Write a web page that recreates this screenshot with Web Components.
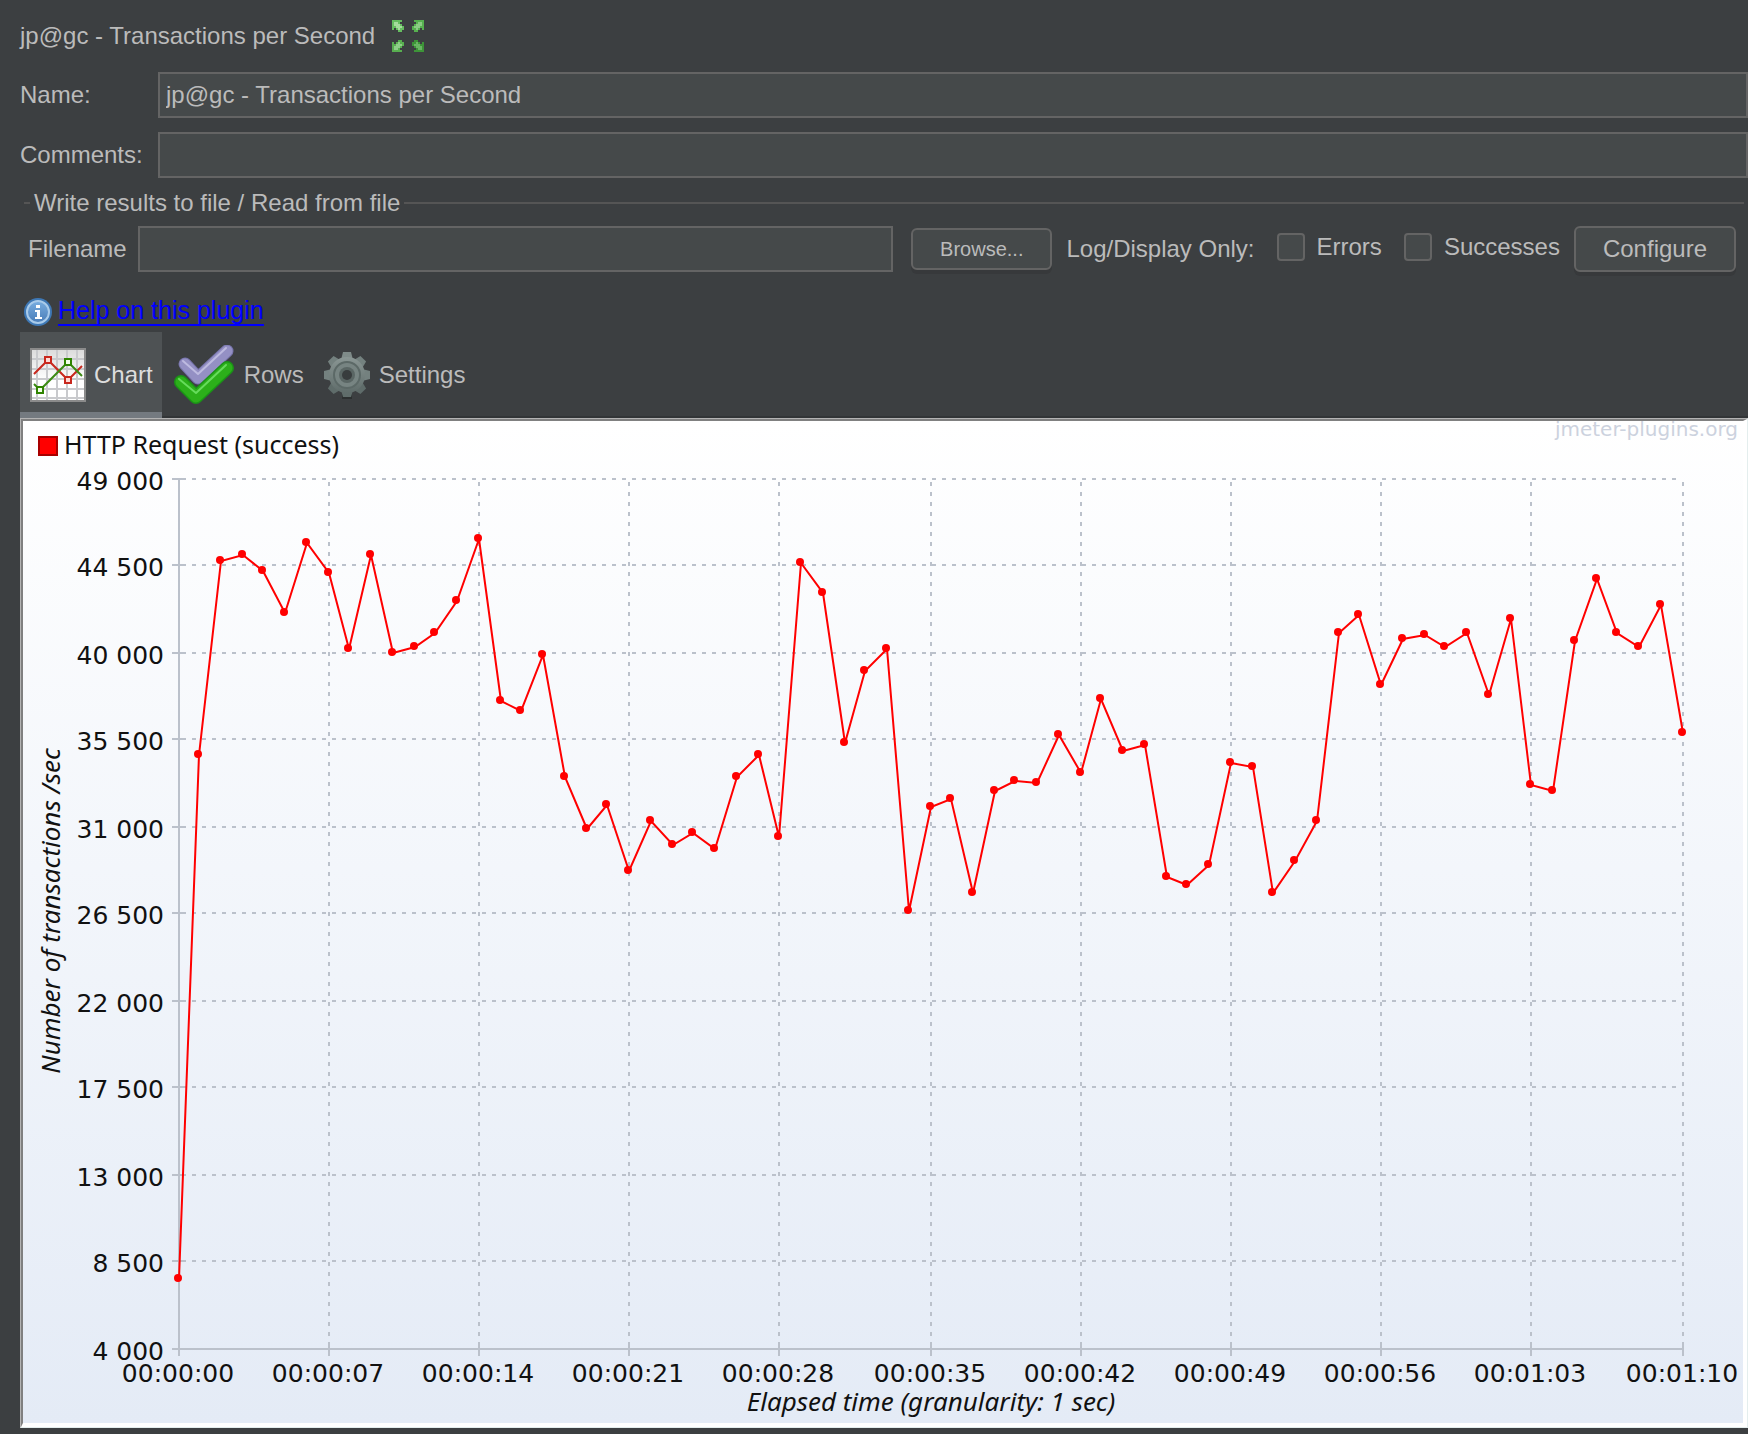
<!DOCTYPE html>
<html lang="en">
<head>
<meta charset="utf-8">
<title>jp@gc - Transactions per Second</title>
<style>
  body {
    margin: 0;
    background: #3c3f41;
    --text: #bbbbbb;
    --field: #45494a;
    --line: #646464;
    color: var(--text);
    font: 24px/28px "Liberation Sans", Arial, sans-serif;
  }
</style>
</head>
<body>
<jm-listener>
  <jm-title slot="title">jp@gc - Transactions per Second</jm-title>
  <jm-field slot="fields" label="Name:" value="jp@gc - Transactions per Second"></jm-field>
  <jm-field slot="fields" label="Comments:"></jm-field>
  <jm-file-panel slot="file"></jm-file-panel>
  <jm-help slot="help">Help on this plugin</jm-help>
  <jm-tabs slot="tabs">
    <jm-tab icon="chart" selected>Chart</jm-tab>
    <jm-tab icon="rows">Rows</jm-tab>
    <jm-tab icon="settings">Settings</jm-tab>
  </jm-tabs>
  <jm-chart-panel>
    <jm-chart legend="HTTP Request (success)" x-title="Elapsed time (granularity: 1 sec)" y-title="Number of transactions /sec" credit="jmeter-plugins.org"></jm-chart>
  </jm-chart-panel>
</jm-listener>

<script>
const ICONS = {
  expand: `
    <svg width="32" height="32" viewBox="0 0 16 16" shape-rendering="crispEdges">
      <defs>
        <path id="a" d="M0 0h5v1h-1v1h1v1h1v2h-1v1h-2v-1h-1v-1h-1v1h-1z"/>
        <path id="b" d="M1 1h2v1h1v1h1v1h-1v1h-1v-1h-1v-1h-1z"/>
      </defs>
      <use href="#a" fill="#66bd60"/><use href="#b" fill="#a5dc9c"/>
      <g transform="matrix(-1 0 0 1 16 0)"><use href="#a" fill="#56b04f"/><use href="#b" fill="#8bcb84"/></g>
      <g transform="matrix(1 0 0 -1 0 16)"><use href="#a" fill="#58ae50"/><use href="#b" fill="#8fce88"/></g>
      <g transform="matrix(-1 0 0 -1 16 16)"><use href="#a" fill="#3d9438"/><use href="#b" fill="#69b563"/></g>
    </svg>`,
  info: `
    <svg width="28" height="28" viewBox="0 0 28 28">
      <defs><linearGradient id="g" x2="0" y2="1"><stop stop-color="#78ade0"/><stop offset="1" stop-color="#4a7db8"/></linearGradient></defs>
      <circle cx="14" cy="14" r="14" fill="#3e78b5"/>
      <circle cx="14" cy="14" r="11" fill="url(#g)" stroke="#a9cbea" stroke-width="2"/>
      <path d="M12 7h4v3h-4zM11 12h5v7h2v2h-7v-2h2v-5h-2z" fill="#fff"/>
    </svg>`,
  chart: `
    <svg width="56" height="54" viewBox="0 0 56 54">
      <defs><linearGradient id="g" x2="0" y2="1"><stop stop-color="#dcdcdc"/><stop offset=".6" stop-color="#fff"/></linearGradient></defs>
      <path d="M0 0h56v54h-56z" fill="#8b8b8b"/>
      <path d="M2 2h52v50h-52z" fill="url(#g)"/>
      <path d="M7 2v50M17 2v50M27 2v50M37 2v50M47 2v50M2 11h52M2 21h52M2 31h52M2 41h52M2 50h52" stroke="#c9cacd" stroke-width="2" fill="none"/>
      <path d="M4 26L18 12L38 32L52 18" stroke="#c8281e" stroke-width="2" fill="none"/>
      <path d="M4 36L10 42L38 14L52 28" stroke="#3c8a14" stroke-width="2" fill="none"/>
      <g stroke-width="2"><path d="M15 9h6v6h-6zM35 29h6v6h-6z" fill="#ffd9d4" stroke="#c8281e"/>
      <path d="M35 11h6v6h-6zM7 39h6v6h-6z" fill="#f2ffe8" stroke="#2f8400"/></g>
    </svg>`,
  rows: `
    <svg width="64" height="60" viewBox="0 0 64 60" fill="none" stroke-linejoin="round" stroke-linecap="round">
      <path d="M13 19L26 33L55 6" stroke="#7673aa" stroke-width="13"/>
      <path d="M13 19L26 33L55 6" stroke="#9490c4" stroke-width="11"/>
      <path d="M11 16L26 29L54 3" stroke="#bdbae0" stroke-width="2"/>
      <path d="M9 37L24 52L55 23" stroke="#1a9416" stroke-width="14"/>
      <path d="M9 37L24 52L55 23" stroke="#2cb01a" stroke-width="11"/>
      <path d="M7 34L24 48L54 20" stroke="#66dc5c" stroke-width="2"/>
    </svg>`,
  settings: `
    <svg width="48" height="48" viewBox="0 0 48 48">
      <defs><linearGradient id="g" x2="0" y2="1"><stop stop-color="#8a9694"/><stop offset="1" stop-color="#5f6c6a"/></linearGradient></defs>
      <path d="M19 42h10v6h-10z" fill="#2c3030"/>
      <path d="M18 9l2-8h8l2 8z" fill="#7f8b89"/>
      <g fill="#74817f"><path d="M18 9l2-8h8l2 8z" transform="rotate(45 24 24)"/><path d="M18 9l2-8h8l2 8z" transform="rotate(-45 24 24)"/>
      <path d="M18 9l2-8h8l2 8z" transform="rotate(90 24 24)"/><path d="M18 9l2-8h8l2 8z" transform="rotate(-90 24 24)"/></g>
      <g fill="#5f6c6a"><path d="M18 9l2-8h8l2 8z" transform="rotate(135 24 24)"/><path d="M18 9l2-8h8l2 8z" transform="rotate(-135 24 24)"/>
      <path d="M18 9l2-7h8l2 7z" transform="rotate(180 24 24)"/></g>
      <circle cx="24" cy="24" r="18" fill="url(#g)"/>
      <circle cx="24" cy="24" r="13" fill="#778482" stroke="#5c6967" stroke-width="2"/>
      <circle cx="24" cy="24" r="8" fill="#5a6664"/>
      <circle cx="24" cy="24" r="5" fill="#383c3d"/>
    </svg>`
};

class JmElement extends HTMLElement {
  constructor() {
    super();
    this.attachShadow({ mode: 'open' });
  }

  connectedCallback() {
    this.shadowRoot.innerHTML = this.render();
  }

  attr(name) {
    return this.getAttribute(name) || '';
  }
}

class JmListener extends JmElement {
  render() {
    return `
      <style>
        :host { display: flex; flex-direction: column; min-height: 100vh; box-sizing: border-box; padding: 20px 0 6px 20px; }
        .fields { display: flex; flex-direction: column; gap: 14px; margin: 20px 0 11px; }
      </style>
      <slot name="title"></slot>
      <div class="fields"><slot name="fields"></slot></div>
      <slot name="file"></slot>
      <slot name="help"></slot>
      <slot name="tabs"></slot>
      <slot></slot>
    `;
  }
}

class JmTitle extends JmElement {
  render() {
    return `
      <style>
        :host { display: flex; align-items: center; gap: 17px; height: 32px; }
        h1 { margin: 0; font: inherit; }
        button { border: 0; padding: 0; background: none; }
        svg { display: block; }
      </style>
      <h1><slot></slot></h1>
      <button type="button" aria-label="Expand">${ICONS.expand}</button>
    `;
  }
}

class JmField extends JmElement {
  render() {
    return `
      <style>
        :host { display: flex; align-items: center; min-width: 0; }
        label { flex: none; width: var(--label-width, 138px); }
        input {
          flex: 1; min-width: 0; height: 46px; box-sizing: border-box; margin: 0; padding: 0 6px;
          border: 2px solid var(--line); border-radius: 0; background: var(--field);
          color: inherit; font: inherit; outline: none;
        }
      </style>
      <label for="input">${this.attr('label')}</label>
      <input id="input" type="text" value="${this.attr('value')}">
    `;
  }
}

class JmButton extends JmElement {
  render() {
    return `
      <style>
        :host { display: block; flex: none; }
        button {
          display: block; height: 46px; padding: 0 27px; margin: 0;
          border: 2px solid var(--line); border-radius: 6px; background: var(--field);
          box-shadow: 0 4px 0 #37393b; color: inherit; font: inherit;
        }
        :host([small]) button { height: 42px; font-size: 20px; }
      </style>
      <button type="button"><slot></slot></button>
    `;
  }
}

class JmCheck extends JmElement {
  render() {
    return `
      <style>
        :host { display: block; flex: none; padding-bottom: 4px; }
        label { display: flex; align-items: center; gap: 12px; }
        input {
          appearance: none; width: 28px; height: 28px; margin: 0;
          border: 2px solid var(--line); border-radius: 4px; background: var(--field);
        }
        input:checked { background: #9aa0a3; }
      </style>
      <label><input type="checkbox"><slot></slot></label>
    `;
  }
}

class JmFilePanel extends JmElement {
  render() {
    return `
      <style>
        :host { display: block; }
        fieldset { margin: 0 4px; padding: 9px 8px 0 4px; border: 0 solid #555555; border-top-width: 2px; min-width: 0; }
        legend { margin-left: 2px; padding: 0 4px; }
        .row { display: flex; align-items: center; gap: 14px; }
        jm-field { flex: 1; --label-width: 110px; margin-right: 4px; }
        .checks { display: flex; gap: 22px; margin-left: 8px; }
      </style>
      <fieldset>
        <legend>Write results to file / Read from file</legend>
        <div class="row">
          <jm-field label="Filename"></jm-field>
          <jm-button small>Browse...</jm-button>
          <span>Log/Display Only:</span>
          <div class="checks">
            <jm-check>Errors</jm-check>
            <jm-check>Successes</jm-check>
          </div>
          <jm-button>Configure</jm-button>
        </div>
      </fieldset>
    `;
  }
}

class JmHelp extends JmElement {
  render() {
    return `
      <style>
        :host { display: flex; gap: 6px; margin: 26px 4px 6px; height: 28px; }
        svg { display: block; }
        a { padding-bottom: 2px; border-bottom: 2px solid #0000ff; color: #0000ff; font-size: 25px; line-height: 24px; text-decoration: none; }
      </style>
      ${ICONS.info}
      <a href="#help"><slot></slot></a>
    `;
  }
}

class JmTabs extends JmElement {
  render() {
    return `
      <style>
        :host { display: block; }
        div { display: flex; box-shadow: inset 0 -2px #323537; }
      </style>
      <div role="tablist"><slot></slot></div>
    `;
  }
}

class JmTab extends JmElement {
  render() {
    return `
      <style>
        :host { display: block; }
        button {
          display: flex; align-items: center; gap: 8px; height: 86px; padding: 0 9px 0 10px; margin: 0;
          border: 0; background: none; color: inherit; font: inherit;
        }
        :host([selected]) button { background: #4e5254; box-shadow: inset 0 -6px #747a80; color: #dddddd; }
        svg { display: block; }
      </style>
      <button type="button" role="tab" aria-selected="${this.hasAttribute('selected')}">${ICONS[this.attr('icon')]}<slot></slot></button>
    `;
  }
}

class JmChartPanel extends JmElement {
  render() {
    return `
      <style>
        :host { display: flex; flex: 1; border: 1px solid; border-color: #b4b4b4 #e4eeee #e4eeee #b4b4b4; }
        div { display: flex; flex: 1; min-width: 0; border: solid; border-width: 2px 4px 4px 2px; border-color: #808080 #ffffff #ffffff #808080; }
      </style>
      <div><slot></slot></div>
    `;
  }
}

// one sample per second
const SAMPLES = [
  7620, 34720, 44760, 45070, 44240, 42070, 45690, 44140, 40210, 45070,
  40000, 40310, 41030, 42690, 45900, 37520, 37000, 39900, 33590, 30900,
  32140, 28720, 31310, 30070, 30690, 29860, 33590, 34720, 30480, 44660,
  43100, 35340, 39070, 40210, 26660, 32030, 32450, 27590, 32860, 33380,
  33280, 35760, 33790, 37620, 34930, 35240, 28410, 28000, 29030, 34310,
  34100, 27590, 29240, 31310, 41030, 41970, 38340, 40720, 40930, 40310,
  41030, 37830, 41760, 33170, 32860, 40620, 43830, 41030, 40310, 42480, 35860
];
const Y_MIN = 4000;
const Y_MAX = 49000;
const DIVISIONS = 10;
const MARGIN = { top: 58, right: 60, bottom: 74, left: 156 };

const spaced = n => String(n).replace(/\B(?=(\d{3})+$)/g, ' ');
const clock = s => [0, Math.floor(s / 60), s % 60].map(n => String(n).padStart(2, '0')).join(':');

class JmChart extends JmElement {
  connectedCallback() {
    super.connectedCallback();
    this.observer = new ResizeObserver(() => this.draw());
    this.observer.observe(this);
    this.draw();
  }

  disconnectedCallback() {
    this.observer.disconnect();
  }

  render() {
    return `
      <style>
        :host { display: block; flex: 1 1 0; min-width: 0; min-height: 500px; overflow: hidden; contain: size; background: linear-gradient(#ffffff, #e4ebf6); }
        svg { display: block; }
        text { fill: #111111; font: 25px "DejaVu Sans", sans-serif; }
        .name, .title { font-family: "Noto Sans", sans-serif; }
        .title { font-size: 26px; font-style: italic; text-anchor: middle; }
        .x { text-anchor: middle; }
        .y { text-anchor: end; }
        .credit { fill: #ccd2de; font-size: 20px; text-anchor: end; }
        .axis, .grid { stroke: #bbc1cb; stroke-width: 2; fill: none; }
        .grid { stroke-dasharray: 4 6; }
        .series { stroke: #ff0000; stroke-width: 2; fill: none; }
        .dot { fill: #ff0000; }
      </style>
      <svg role="img"></svg>
    `;
  }

  draw() {
    const w = this.clientWidth;
    const h = this.clientHeight;
    const { left, top } = MARGIN;
    const right = w - MARGIN.right;
    const bottom = h - MARGIN.bottom;
    if (right <= left || bottom <= top) return;

    // keep every position on the two pixel grid of the dashes
    const last = SAMPLES.length - 1;
    const px = i => left + Math.floor(i * (right - left) / last / 2) * 2;
    const py = v => bottom - Math.round((v - Y_MIN) / (Y_MAX - Y_MIN) * (bottom - top) / 2) * 2;

    let grid = '';
    let axis = `M${left} ${top}V${bottom + 7}M${left - 7} ${bottom}H${right}`;
    let labels = '';
    for (let n = 0; n <= DIVISIONS; n++) {
      const value = Y_MIN + n * (Y_MAX - Y_MIN) / DIVISIONS;
      const y = py(value);
      const second = n * last / DIVISIONS;
      const x = px(second);
      if (n > 0) {
        grid += `M${left + 3} ${y}H${right - 2}M${x} ${top + 3}V${bottom - 3}`;
        axis += `M${left - 7} ${y}h10M${x} ${bottom - 7}v14`;
      }
      labels += `<text class="y" x="${left - 15}" y="${y + 11}">${spaced(value)}</text>`;
      labels += `<text class="x" x="${x - 1}" y="${bottom + 33}">${clock(second)}</text>`;
    }

    const points = SAMPLES.map((v, i) => [px(i), py(v)]);
    const dots = points.map(([x, y]) => `<circle class="dot" cx="${x - 1}" cy="${y - 1}" r="4"/>`).join('');
    const middle = (top + bottom) / 2;

    const svg = this.shadowRoot.querySelector('svg');
    svg.setAttribute('width', w);
    svg.setAttribute('height', h);
    svg.innerHTML = `
      <text class="credit" x="${w - 5}" y="15">${this.attr('credit')}</text>
      <rect x="16" y="16" width="18" height="18" fill="#ff0000" stroke="#a80000" stroke-width="2"/>
      <text class="name" x="41" y="33">${this.attr('legend')}</text>
      <path class="grid" d="${grid}"/>
      <path class="axis" d="${axis}"/>
      ${labels}
      <text class="title" transform="translate(37 ${middle - 3}) rotate(-90)">${this.attr('y-title')}</text>
      <text class="title" x="${(left + right) / 2}" y="${bottom + 62}">${this.attr('x-title')}</text>
      <polyline class="series" points="${points.join(' ')}"/>
      ${dots}
    `;
  }
}

customElements.define('jm-listener', JmListener);
customElements.define('jm-title', JmTitle);
customElements.define('jm-field', JmField);
customElements.define('jm-button', JmButton);
customElements.define('jm-check', JmCheck);
customElements.define('jm-file-panel', JmFilePanel);
customElements.define('jm-help', JmHelp);
customElements.define('jm-tabs', JmTabs);
customElements.define('jm-tab', JmTab);
customElements.define('jm-chart-panel', JmChartPanel);
customElements.define('jm-chart', JmChart);
</script>
</body>
</html>
